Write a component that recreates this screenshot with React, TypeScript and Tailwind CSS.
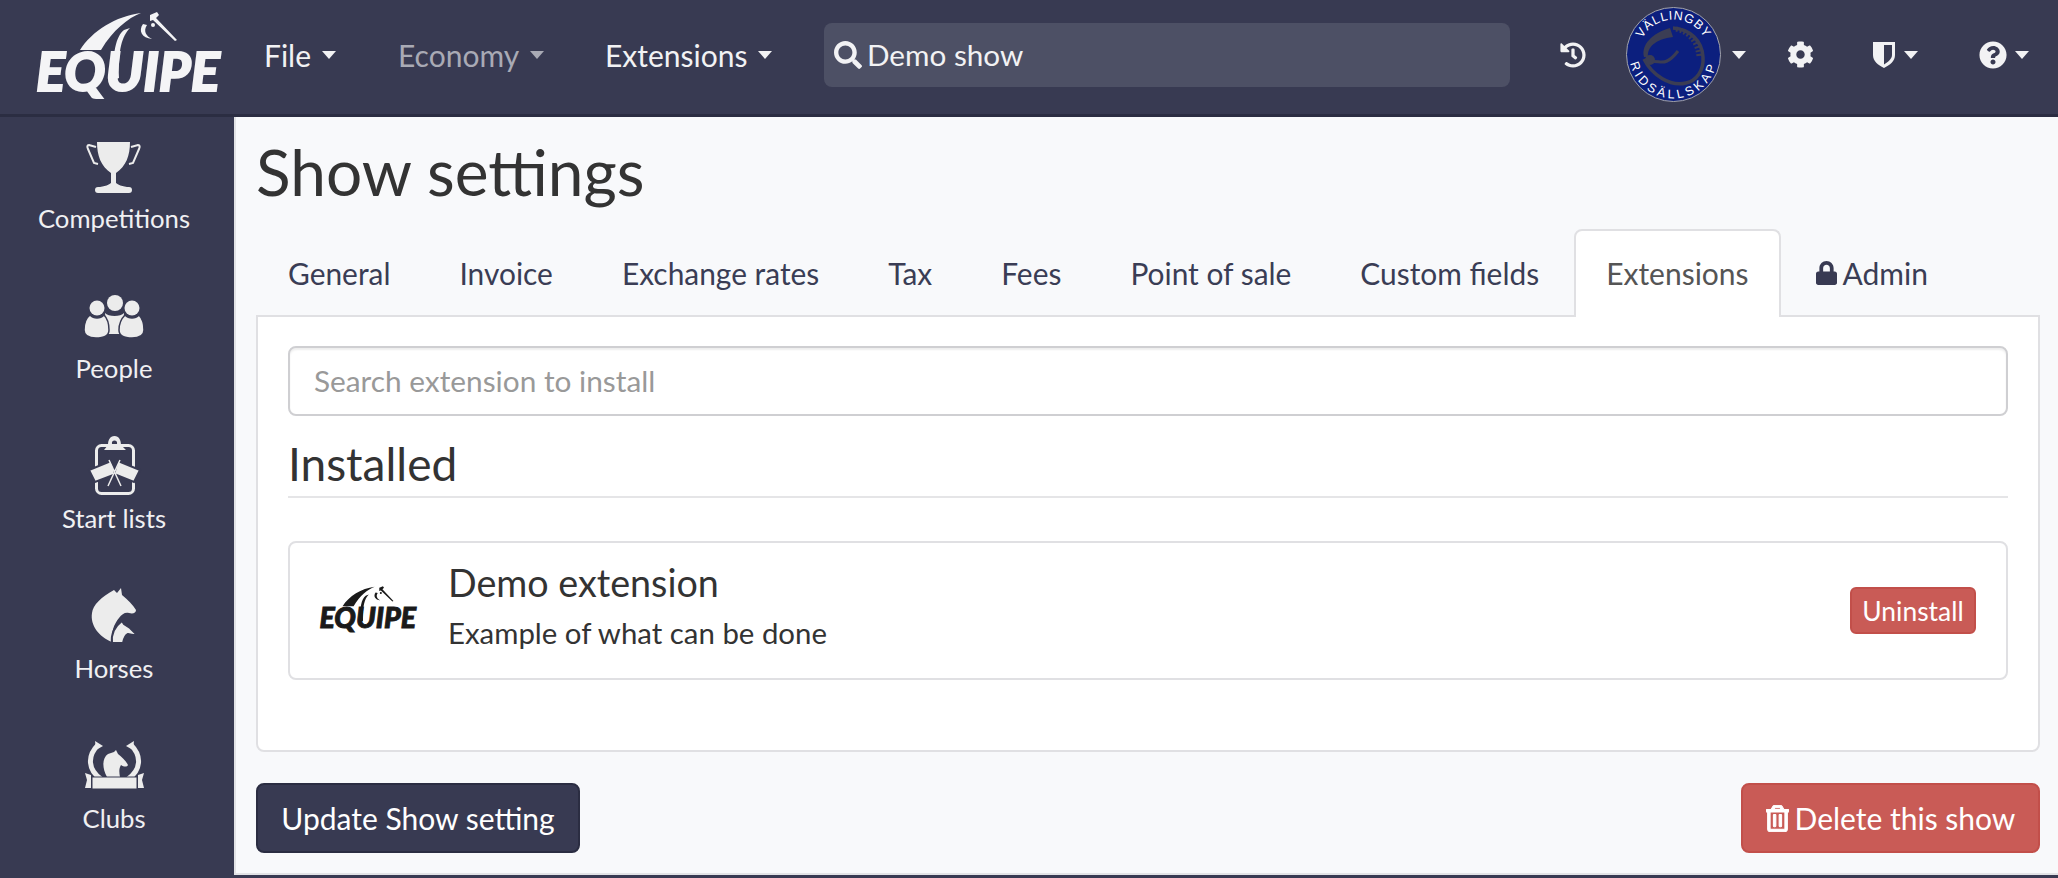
import React from "react";
import { FaSearch, FaHistory, FaCog, FaQuestionCircle, FaLock, FaRegTrashAlt } from "react-icons/fa";

function Caret({ className = "" }: { className?: string }) {
  return <span className={`inline-block w-0 h-0 border-x-[7.5px] border-x-transparent border-t-[8px] ${className}`} />;
}

function Logo({ color, className }: { color: string; className: string }) {
  return (
    <svg viewBox="37 12 183 85" className={`overflow-visible ${className}`} fill={color}>
      <path d="M80 50 C92 31 116 16 141 13 C128 18 113 30 101 50 Z" />
      <path d="M130 28 C122 36 118 50 119 78 L114 80 C112 54 116 36 124 30 Z" />
      <path d="M143 24 C138 31 142 38 152 39 C146 36 143 31 147 25 Z" />
      <circle cx="153" cy="25" r="2" />
      <path d="M150 15 L157 12 L159 15 L156 18 L177 40 L175 41 L153 20 L150 21 Z" />
      <text x="36" y="91" stroke={color} strokeWidth="1.8" fontFamily="Lato, sans-serif" fontWeight="900" fontStyle="italic" fontSize="54" textLength="184" lengthAdjust="spacingAndGlyphs">EQUIPE</text>
    </svg>
  );
}

function ClubBadge() {
  return (
    <svg viewBox="0 0 95 95" className="w-[95px] h-[95px]">
      <defs>
        <path id="topArc" d="M12.5 47.5 A35 35 0 1 1 82.5 47.5" />
        <path id="botArc" d="M3.5 47.5 A44 44 0 0 0 91.5 47.5" />
      </defs>
      <circle cx="47.5" cy="47.5" r="47" fill="#0c1f7e" stroke="#a5a5aa" strokeWidth="1" />
      <path d="M18 50 C15 38 26 26 44 21 L47 30 C30 32 21 40 22 50 Z" fill="#3b3d54" />
      <path d="M47 21 C64 22 76 34 77 50 C78 64 70 74 60 76 C44 80 26 68 18 52" fill="none" stroke="#3b3d54" strokeWidth="3.5" />
      <path d="M50 22 C64 25 72 36 73 50" fill="none" stroke="#3b3d54" strokeWidth="5" strokeDasharray="2 2" />
      <path d="M24 55 C34 52 38 62 52 44" fill="none" stroke="#3b3d54" strokeWidth="3" />
      <circle cx="24" cy="53" r="5" fill="#3b3d54" />
      <text fill="#ffffff" fontFamily="'Liberation Sans', sans-serif" fontSize="12.5" letterSpacing="0.8">
        <textPath href="#topArc" startOffset="50%" textAnchor="middle">VÄLLINGBY</textPath>
      </text>
      <text fill="#ffffff" fontFamily="'Liberation Sans', sans-serif" fontSize="12.5" letterSpacing="3.2">
        <textPath href="#botArc" startOffset="50%" textAnchor="middle">RIDSÄLLSKAP</textPath>
      </text>
    </svg>
  );
}

function Trophy() {
  return (
    <g transform="translate(-1 0)">
      <path d="M17 12 H50 C50 26 46 36 36 43 V53 C38 55 42 56 47 57 H49 C51 57 52 58 52 60 C52 62 51 63 49 63 H18 C16 63 15 62 15 60 C15 58 16 57 18 57 H20 C25 56 29 55 31 53 V43 C21 36 17 26 17 12 Z" />
      <path d="M16 17 L9 15 C7 15 7 17 8 19 L14 33 L18 34" fill="none" stroke="#ececec" strokeWidth="2" />
      <path d="M51 17 L58 15 C60 15 60 17 59 19 L53 33 L49 34" fill="none" stroke="#ececec" strokeWidth="2" />
    </g>
  );
}

function PeopleIcon() {
  return (
    <g>
      <circle cx="34" cy="23" r="8" />
      <circle cx="16" cy="28" r="7.5" />
      <circle cx="51" cy="28" r="7.5" />
      <path d="M24 33 C27 37 40 37 43 33 L42 54 H26 Z" />
      <path d="M9 35 C13 39 19 39 23 35 C26 38 28 44 28 50 C28 56 22 58 15 58 C8 58 3 56 3 50 C3 44 5 38 9 35 Z" stroke="#383a52" strokeWidth="1.5" />
      <path d="M44 35 C48 39 54 39 58 35 C61 38 63 44 63 50 C63 56 58 58 51 58 C44 58 38 56 38 50 C38 44 41 38 44 35 Z" stroke="#383a52" strokeWidth="1.5" />
    </g>
  );
}

function ListIcon() {
  return (
    <g>
      <rect x="15.5" y="15.5" width="37" height="48" rx="5" fill="none" stroke="#ececec" strokeWidth="3" />
      <path fillRule="evenodd" d="M23 20 L27 15 C27 10 29 6 33.5 6 C38 6 40 10 40 15 L45 20 Z M33.5 10.5 A2.6 2.6 0 1 0 33.5 15.7 A2.6 2.6 0 1 0 33.5 10.5 Z" />
      <path d="M8 40 L30 31 L35 44 L14 52 Z" stroke="#383a52" strokeWidth="2" />
      <path d="M59 40 L37 31 L33 44 L53 52 Z" stroke="#383a52" strokeWidth="2" />
      <path d="M27 56 L39 30 M40 56 L28 30" fill="none" stroke="#ececec" strokeWidth="1.5" />
    </g>
  );
}

function HorsesIcon() {
  return (
    <g>
      <path d="M33 10 L36 13 L40 8 L41 15 C47 20 52 25 55 30 C55 33 52 34 48 33 C44 32 41 34 38 38 C33 44 30 52 31 62 C18 57 9 45 11 33 C12 25 20 17 33 10 Z" />
      <path d="M41 41 L43 44 L49 48 L55 54 C54 56 51 55 47 54 C45 55 43 58 42 63 H31 C30 55 33 47 41 41 Z" stroke="#383a52" strokeWidth="2" />
    </g>
  );
}

function ClubsIcon() {
  return (
    <g>
      <path d="M17 15 C6 26 7 40 20 49" fill="none" stroke="#ececec" strokeWidth="5" />
      <path d="M50 15 C61 26 60 40 47 49" fill="none" stroke="#ececec" strokeWidth="5" />
      <path d="M14 11 L22 16 L15 20 Z" />
      <path d="M53 11 L45 16 L52 20 Z" />
      <path d="M35 20 L37 24 C41 27 45 31 47 35 C46 37 43 37 40 35 C38 38 38 42 39 47 H26 C21 38 21 28 27 24 L33 22 Z" />
      <path d="M11 47 H56 V59 H11 Z" stroke="#383a52" strokeWidth="1" />
      <path d="M10 45 L4 43 L6 50 L4 58 L10 58 Z" />
      <path d="M57 45 L63 43 L61 50 L63 58 L57 58 Z" />
    </g>
  );
}

const sideItems: [string, React.ReactNode][] = [
  ["Competitions", <Trophy />],
  ["People", <PeopleIcon />],
  ["Start lists", <ListIcon />],
  ["Horses", <HorsesIcon />],
  ["Clubs", <ClubsIcon />],
];

const tabs = ["General", "Invoice", "Exchange rates", "Tax", "Fees", "Point of sale", "Custom fields"];

export default function App() {
  return (
    <div className="w-[2058px] h-[878px] overflow-hidden flex flex-col bg-[#383a52] font-['Lato',sans-serif] text-[30px] leading-[42px]">
      <header className="h-[117px] shrink-0 flex items-center border-b-[3px] border-[#2b2d42] pb-[5px] relative text-[#f2f2f4]">
        <Logo color="#f4f4f6" className="w-[183px] h-[85px] ml-[37px] shrink-0" />
        <nav className="flex items-center ml-[44px] w-[560px] shrink-0">
          <span className="flex items-center gap-[11px] w-[134px]">File <Caret className="border-t-[#f2f2f4]" /></span>
          <span className="flex items-center gap-[11px] w-[207px] text-[#a9aab5]">Economy <Caret className="border-t-[#a9aab5]" /></span>
          <span className="flex items-center gap-[11px]">Extensions <Caret className="border-t-[#f2f2f4]" /></span>
        </nav>
        <div className="w-[686px] h-[64px] shrink-0 rounded-[8px] bg-[#4d5065] flex items-center pl-[10px] gap-[5px] text-[#f2f2f4]">
          <FaSearch className="w-[28px] h-[28px]" />
          <span className="text-[29.7px]">Demo show</span>
        </div>
        <div className="flex items-center ml-[50px] shrink-0">
          <FaHistory className="w-[26px] h-[26px]" />
          <div className="ml-[40px] flex items-center">
            <ClubBadge />
            <Caret className="ml-[11px] border-t-[#f2f2f4]" />
          </div>
          <FaCog className="ml-[41px] w-[27px] h-[27px]" />
          <div className="ml-[59px] flex items-center">
            <svg viewBox="0 0 22 26" className="w-[22px] h-[26px]">
              <path fillRule="evenodd" fill="#f2f2f4" d="M0 0 H22 V13 C22 19 17 23 11 26 C5 23 0 19 0 13 Z M11 3 V22.5 C15 20 19 17 19 13 V3 Z" />
            </svg>
            <Caret className="ml-[9px] border-t-[#f2f2f4]" />
          </div>
          <div className="ml-[61px] flex items-center">
            <FaQuestionCircle className="w-[28px] h-[28px]" />
            <Caret className="ml-[8px] border-t-[#f2f2f4]" />
          </div>
        </div>
      </header>

      <div className="flex-1 flex min-h-0">
        <aside className="w-[234px] shrink-0 pt-[13px] pr-[6px] text-[#f0f0f2] text-[25.7px] leading-[32px]">
          {sideItems.map(([label, icon]) => (
            <div key={label} className="h-[150px] flex flex-col items-center">
              <svg viewBox="0 0 66 66" className="w-[66px] h-[66px]" fill="#ececec">{icon}</svg>
              <div className="mt-[6px]">{label}</div>
            </div>
          ))}
        </aside>

        <main className="flex-1 h-[758px] bg-[#f8f9fb] border-l-2 border-b-2 border-[#e2e3e6] pl-[20px] pr-[18px] text-[#333]">
          <h1 className="h-[112px] pt-[18px] text-[64px] leading-[74px] font-normal text-[#333]">Show settings</h1>
          <div className="flex h-[88px] relative z-10 mb-[-2px] ml-[-2px] text-[#3a3d55] text-[29.9px]">
            {tabs.map((t) => (
              <div key={t} className="px-[32px] mr-[1px] border-2 border-transparent flex items-center">{t}</div>
            ))}
            <div className="px-[30px] mr-[1px] border-2 border-b-0 border-[#e0e0e3] rounded-t-[8px] bg-white flex items-center pb-[2px] text-[#555] text-[30px]">Extensions</div>
            <div className="px-[32px] border-2 border-transparent flex items-center gap-[6px] text-[30px]">
              <FaLock className="w-[21px] h-[24px] text-[#383a52]" />Admin
            </div>
          </div>
          <section className="h-[437px] border-2 border-[#e0e0e3] rounded-b-[8px] bg-white px-[30px] pt-[29px]">
            <div className="h-[70px] border-2 border-[#cfcfd2] rounded-[8px] shadow-[inset_0_2px_2px_rgba(0,0,0,0.07)] flex items-center px-[24px] text-[#999] text-[29.8px]">Search extension to install</div>
            <h2 className="mt-[13px] h-[69px] pt-[10px] text-[46px] leading-[50px] font-normal border-b-2 border-[#e5e5e7] text-[#333]">Installed</h2>
            <div className="mt-[43px] h-[139px] border-2 border-[#e0e0e3] rounded-[8px] flex items-center">
              <Logo color="#1a1a1a" className="w-[96px] h-[45px] ml-[30px] mt-[-4px] shrink-0" />
              <div className="ml-[32px] flex-1 mb-[10px]">
                <div className="text-[37.7px] leading-[50px] text-[#333]">Demo extension</div>
                <div className="text-[29.4px] leading-[42px] text-[#333] mt-[4px]">Example of what can be done</div>
              </div>
              <div className="mr-[30px] w-[126px] h-[47px] rounded-[6px] bg-[#c95b56] border-2 border-[#c24f4a] text-white text-[26.4px] flex items-center justify-center">Uninstall</div>
            </div>
          </section>
          <div className="mt-[31px] flex justify-between">
            <div className="w-[324px] h-[70px] rounded-[8px] bg-[#383a52] border-2 border-[#2b2d42] text-white flex items-center justify-center">Update Show setting</div>
            <div className="w-[299px] h-[70px] rounded-[8px] bg-[#c95b56] border-2 border-[#c24f4a] text-white flex items-center justify-center gap-[6px]">
              <FaRegTrashAlt className="w-[23px] h-[27px] stroke-[20px]" />Delete this show
            </div>
          </div>
        </main>
      </div>
    </div>
  );
}
